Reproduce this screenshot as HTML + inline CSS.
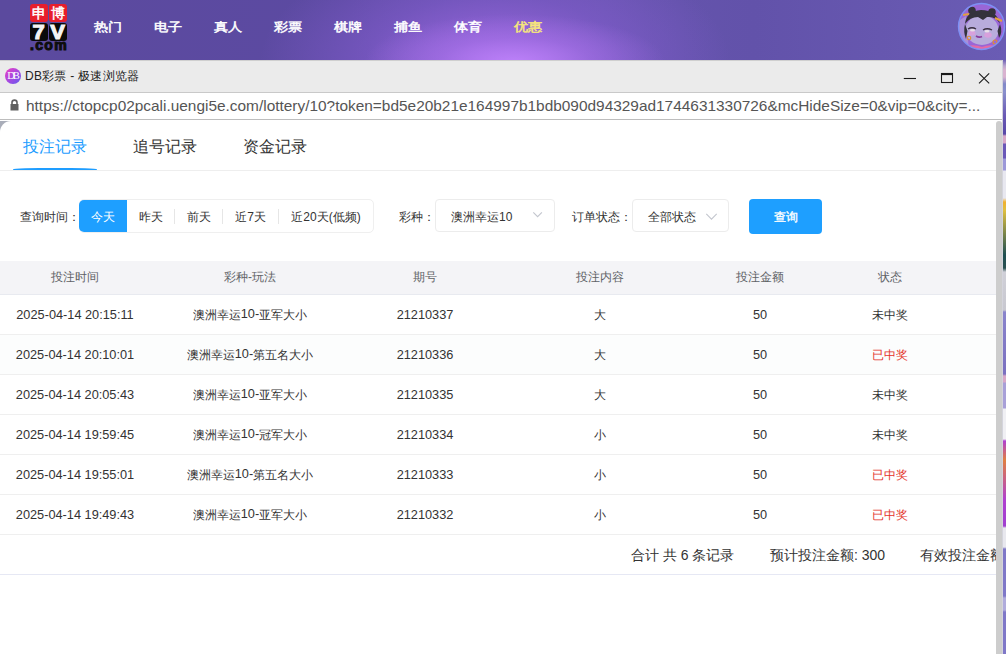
<!DOCTYPE html>
<html><head><meta charset="utf-8">
<style>
*{margin:0;padding:0;box-sizing:border-box}
html,body{width:1006px;height:654px;overflow:hidden;background:#fff;font-family:"Liberation Sans",sans-serif}
#hdr{position:absolute;left:0;top:0;width:1006px;height:60px;
 background:radial-gradient(ellipse 150px 48px at 515px 62px,rgba(190,130,250,0.95) 0%,rgba(170,115,235,0.55) 50%,rgba(140,100,215,0) 100%),radial-gradient(ellipse 235px 120px at 495px 62px,rgba(160,105,228,0.95) 0%,rgba(130,92,205,0.6) 55%,rgba(110,80,190,0) 100%),linear-gradient(90deg,#5b4a9e 0%,#5c4aa2 35%,#6654ae 60%,#6252aa 75%,#6a5cb4 100%)}
.logo{position:absolute;left:30px;top:4px;width:38px;height:47px}
.logo .r{position:absolute;top:0;width:18px;height:18px;background:#e81e2c;border-radius:3px;color:#fff;font-size:14px;line-height:18px;text-align:center;-webkit-text-stroke:0.5px #fff}
.logo .b{position:absolute;top:19px;width:18px;height:18px;background:#0a0a0a;border-radius:3px;color:#f4f4f4;font-size:20px;font-weight:bold;line-height:19px;text-align:center;-webkit-text-stroke:1.1px #f4f4f4}
.logo .b span{display:inline-block;transform:scaleX(1.1)}
.logo .c{position:absolute;top:33.5px;left:-1px;width:40px;font-size:14px;font-weight:bold;color:#0d0d0d;line-height:14px;letter-spacing:1.3px;text-align:center;-webkit-text-stroke:1px #0d0d0d}
.nav{position:absolute;top:17px;font-size:14px;color:#fff;font-weight:normal;-webkit-text-stroke:0.55px currentColor;line-height:20px;transform:scaleY(0.85);transform-origin:0 50%}
.av{position:absolute;left:958px;top:3px;width:47px;height:47px;border-radius:50%;background:radial-gradient(circle at 50% 55%,#a99ad8 0%,#9b8bd0 40%,#8a5fc9 70%,#9567d6 100%);border:1.5px solid #7d8ff0;overflow:hidden}
#win{position:absolute;left:0;top:60px;width:1002px;height:594px;background:#fff}
#tb{position:absolute;left:0;top:0;width:1002px;height:33px;background:#ebebeb;border-top:1px solid #cfcfcf;border-bottom:1px solid #c9c9c9}
#tb .ic{position:absolute;left:5px;top:7px;width:16px;height:16px;border-radius:50%;background:linear-gradient(135deg,#e040c8 10%,#a848e0 50%,#6a58ec 95%);color:#fff;font-family:"Liberation Serif",serif;font-size:10.5px;line-height:16px;text-align:center;letter-spacing:-2px;text-indent:-1px}
#tb .tt{position:absolute;left:25px;top:7px;font-size:12px;color:#222;line-height:16px;letter-spacing:0.25px}
#ab{position:absolute;left:0;top:33px;width:1002px;height:27px;background:#fff;border-bottom:1px solid #bdbdbd}
#ab .u{position:absolute;left:26px;top:4px;font-size:15.41px;color:#555;line-height:18px;white-space:nowrap}
#content{position:absolute;left:0;top:61px;width:997px;height:533px;background:#fff;border-top-left-radius:11px;overflow:hidden}
#cc{position:absolute;left:0;top:-60px;width:997px;height:654px;overflow:hidden}
#corner{position:absolute;left:0;top:61px;width:12px;height:12px;background:#a9adb9}
#sb{position:absolute;left:996px;top:61px;width:6px;height:540px;background:#cdcdcd;border-radius:3px 3px 0 0}
#strip{position:absolute;left:1002px;top:60px;width:4px;height:594px;border-left:1px solid #d4d4dc;background:linear-gradient(180deg,#6e60b6 0px,#b9a6cf 6px,#d9b3d0 10px,#d9b3d0 17px,#8088c8 24px,#8a90cc 32px,#6a5ab4 55px,#5848a8 74px,#d8a8c8 76px,#d8a8c8 83px,#6a58b8 84px,#6a58b8 98px,#9c98d8 99px,#9c98d8 110px,#e8e8f0 111px,#e8e8f0 138px,#f0b030 142px,#e0c040 150px,#1f4f52 195px,#2a5050 208px,#d0d0d8 212px,#c8c8d0 250px,#8a84cc 252px,#7a70c0 314px,#d8a8c8 316px,#d8a8c8 322px,#a8a0d8 323px,#a8a0d8 348px,#f0f0f4 349px,#f0f0f4 379px,#b040d0 381px,#e08040 400px,#b040d0 440px,#a040d0 466px,#e8e8ee 468px,#e8e8ee 487px,#7f78c8 489px,#7f78c8 536px,#b0acdc 538px,#b0acdc 550px,#7f78c8 552px,#7f78c8 594px)}
.tab{position:absolute;top:137px;font-size:16px;line-height:20px;color:#333}
.tab.on{color:#1e9dff}
.uline{position:absolute;left:13px;top:168px;width:84px;height:2.5px;background:#1e9dff;border-radius:50%}
.tbord{position:absolute;left:0;top:170px;width:997px;height:1px;background:#eeeeee}
.lbl{position:absolute;font-size:12px;color:#333;line-height:16px}
.grp{position:absolute;left:79px;top:199px;width:295px;height:34px;border:1px solid #efefef;border-radius:5px}
.g{position:absolute;top:0;height:32px;line-height:34px;font-size:12px;color:#333;text-align:center}
.g.on{background:#1e9fff;color:#fff;border-radius:5px 0 0 5px}
.sep{position:absolute;top:9px;width:1px;height:15px;background:#e6e6e6}
.sel{position:absolute;top:199px;height:33px;border:1px solid #ececec;border-radius:4px;font-size:12px;color:#333;line-height:31px}
.chev{position:absolute;top:12px;width:7px;height:7px;border-right:1px solid #bbb;border-bottom:1px solid #bbb;transform:rotate(45deg)}
.btn{position:absolute;left:749px;top:199px;width:73px;height:35px;background:#1e9fff;border-radius:4px;color:#fff;font-size:12px;text-align:center;line-height:37px;-webkit-text-stroke:0.35px #fff}
table{position:absolute;left:0;top:261px;width:997px;border-collapse:collapse}
th{height:33px;background:#f4f4f7;font-weight:normal;font-size:12px;color:#606266;border-bottom:1px solid #e8eaf0}
td{height:40px;font-size:12.75px;color:#333;text-align:center;border-bottom:1px solid #efefef}
.red{color:#e4342c}
.k{font-size:12px;position:relative;top:1px}
.foot{position:absolute;top:546px;font-size:14px;color:#333;line-height:18px;white-space:nowrap}
.fbord{position:absolute;left:0;top:574px;width:997px;height:1px;background:#e6e8f4}
</style></head><body>
<div id="hdr">
 <div class="logo">
  <div class="r" style="left:0">申</div><div class="r" style="left:19px">博</div>
  <div class="b" style="left:0"><span>7</span></div><div class="b" style="left:19px"><span>V</span></div>
  <div class="c">.com</div>
 </div>
 <div class="nav" style="left:94px">热门</div>
 <div class="nav" style="left:154px">电子</div>
 <div class="nav" style="left:214px">真人</div>
 <div class="nav" style="left:274px">彩票</div>
 <div class="nav" style="left:334px">棋牌</div>
 <div class="nav" style="left:394px">捕鱼</div>
 <div class="nav" style="left:454px">体育</div>
 <div class="nav" style="left:514px;color:#f8e87a">优惠</div>
 <svg class="avs" style="position:absolute;left:957px;top:2px" width="49" height="49" viewBox="0 0 49 49">
  <defs><clipPath id="cp"><circle cx="24.5" cy="24.5" r="23"/></clipPath></defs>
  <g clip-path="url(#cp)">
   <rect width="49" height="49" fill="#9a66d6"/>
   <path d="M0 20 L9 14 L12 49 L0 49Z" fill="#a890d8"/>
   <ellipse cx="25" cy="28" rx="16.5" ry="15" fill="#b8acdc"/>
   <path d="M8 22 Q9 9 24 8 Q40 8 43 22 Q39 14 30 15 L26 18 L21 15 Q13 15 8 22Z" fill="#34323c"/>
   <circle cx="15" cy="8.5" r="3.8" fill="#34323c"/>
   <circle cx="35" cy="10" r="3.8" fill="#34323c"/>
   <path d="M8 22 Q6 30 9 37 L10.5 29Z M43 22 Q46 30 42 36 L40.5 29Z" fill="#34323c"/>
   <path d="M6 13 L12 12 M38 16 L45 19" stroke="#e0a040" stroke-width="2"/>
   <ellipse cx="15" cy="31" rx="3.5" ry="2.6" fill="#d8a0dc"/>
   <ellipse cx="31" cy="33" rx="3.8" ry="2.8" fill="#d8a0dc"/>
   <path d="M11 27 Q15 24.5 19 27" stroke="#3a3040" stroke-width="1.3" fill="none"/>
   <path d="M26 28 Q30 25.5 35 28" stroke="#3a3040" stroke-width="1.3" fill="none"/>
   <ellipse cx="15.5" cy="28.3" rx="2.5" ry="1.2" fill="#e8e0e8"/>
   <ellipse cx="30" cy="29.3" rx="2.5" ry="1.2" fill="#e8e0e8"/>
   <path d="M19 34 Q22 36 25 34.5" stroke="#8a3a9a" stroke-width="1.6" fill="none"/>
   <path d="M2 49 Q12 40 25 45 Q38 40 47 49Z" fill="#e46aa8"/>
   <path d="M6 49 Q14 44 25 47.5 Q36 44 44 49Z" fill="#b9a8dc"/>
   <circle cx="12" cy="36" r="1.8" fill="none" stroke="#e09030" stroke-width="1.1"/>
   <circle cx="38" cy="40" r="2" fill="none" stroke="#e09030" stroke-width="1.1"/>
  </g>
  <circle cx="24.5" cy="24.5" r="23" fill="none" stroke="#7d90f4" stroke-width="1.4"/>
 </svg>
</div>
<div id="strip"></div>
<div id="win">
 <div id="tb"><div class="ic">DB</div><div class="tt">DB彩票 - 极速浏览器</div></div>
 <div id="ab"><svg style="position:absolute;left:10px;top:6px" width="9" height="12" viewBox="0 0 9 12"><path d="M2 5.5V3.6A2.5 2.5 0 0 1 7 3.6V5.5" fill="none" stroke="#5f5f5f" stroke-width="1.6"/><rect x="0.5" y="5" width="8" height="6.5" fill="#5f5f5f"/></svg><div class="u">https://ctopcp02pcali.uengi5e.com/lottery/10?token=bd5e20b21e164997b1bdb090d94329ad1744631330726&amp;mcHideSize=0&amp;vip=0&amp;city=...</div></div>
 <div id="corner"></div>
 <div id="content"></div>
 <div id="cc">
  <div class="tab on" style="left:23px">投注记录</div>
  <div class="tab" style="left:133px">追号记录</div>
  <div class="tab" style="left:243px">资金记录</div>
  <div class="uline"></div>
  <div class="tbord"></div>
  <div class="lbl" style="left:20px;top:209px">查询时间：</div>
  <div class="grp">
   <div class="g on" style="left:-1px;width:48px;top:0;height:32px">今天</div>
   <div class="g" style="left:47px;width:47px">昨天</div>
   <div class="sep" style="left:94px"></div>
   <div class="g" style="left:95px;width:47px">前天</div>
   <div class="sep" style="left:142px"></div>
   <div class="g" style="left:143px;width:55px">近7天</div>
   <div class="sep" style="left:198px"></div>
   <div class="g" style="left:199px;width:94px">近20天(低频)</div>
  </div>
  <div class="lbl" style="left:399px;top:209px">彩种：</div>
  <div class="sel" style="left:435px;width:120px"><span style="position:absolute;left:15px;top:2px">澳洲幸运10</span></div>
  <div class="lbl" style="left:572px;top:209px">订单状态：</div>
  <div class="sel" style="left:632px;width:97px"><span style="position:absolute;left:15px;top:2px">全部状态</span></div>
  <div class="btn">查询</div>
  <svg style="position:absolute;left:0;top:0" width="997" height="654"><path d="M533.3 212.3L537.6 216.6L541.9 212.3M706.3 213.9L711.5 219.1L716.7 213.9" fill="none" stroke="#c3c6ce" stroke-width="1.1"/></svg>
  <table>
   <tr><th style="width:150px">投注时间</th><th style="width:200px">彩种-玩法</th><th style="width:150px">期号</th><th style="width:200px">投注内容</th><th style="width:120px">投注金额</th><th style="width:140px">状态</th><th></th></tr>
   <tr><td>2025-04-14 20:15:11</td><td><span class="k">澳洲幸运</span>10-<span class="k">亚军大小</span></td><td>21210337</td><td><span class="k">大</span></td><td>50</td><td><span class="k">未中奖</span></td><td></td></tr>
   <tr style="background:#fcfdfd"><td>2025-04-14 20:10:01</td><td><span class="k">澳洲幸运</span>10-<span class="k">第五名大小</span></td><td>21210336</td><td><span class="k">大</span></td><td>50</td><td class="red"><span class="k">已中奖</span></td><td></td></tr>
   <tr><td>2025-04-14 20:05:43</td><td><span class="k">澳洲幸运</span>10-<span class="k">亚军大小</span></td><td>21210335</td><td><span class="k">大</span></td><td>50</td><td><span class="k">未中奖</span></td><td></td></tr>
   <tr><td>2025-04-14 19:59:45</td><td><span class="k">澳洲幸运</span>10-<span class="k">冠军大小</span></td><td>21210334</td><td><span class="k">小</span></td><td>50</td><td><span class="k">未中奖</span></td><td></td></tr>
   <tr><td>2025-04-14 19:55:01</td><td><span class="k">澳洲幸运</span>10-<span class="k">第五名大小</span></td><td>21210333</td><td><span class="k">小</span></td><td>50</td><td class="red"><span class="k">已中奖</span></td><td></td></tr>
   <tr><td>2025-04-14 19:49:43</td><td><span class="k">澳洲幸运</span>10-<span class="k">亚军大小</span></td><td>21210332</td><td><span class="k">小</span></td><td>50</td><td class="red"><span class="k">已中奖</span></td><td></td></tr>
  </table>
  <div class="foot" style="left:631px">合计 共 6 条记录</div>
  <div class="foot" style="left:770px">预计投注金额: 300</div>
  <div class="foot" style="left:920px">有效投注金额</div>
  <div class="fbord"></div>
 </div>
 <div id="sb"></div>
 <div id="wc">
  <svg style="position:absolute;left:900px;top:10px" width="100" height="16" viewBox="0 0 100 16">
   <path d="M3.8 8.5H16" stroke="#1a1a1a" stroke-width="1.1"/>
   <rect x="41.5" y="3.5" width="11" height="9" fill="none" stroke="#1a1a1a" stroke-width="1.1"/>
   <path d="M41 4.3H53" stroke="#1a1a1a" stroke-width="1.6"/>
   <path d="M79 3.3L89.2 13.3M89.2 3.3L79 13.3" stroke="#1a1a1a" stroke-width="1.1"/>
  </svg>
 </div>
</div>
</body></html>
